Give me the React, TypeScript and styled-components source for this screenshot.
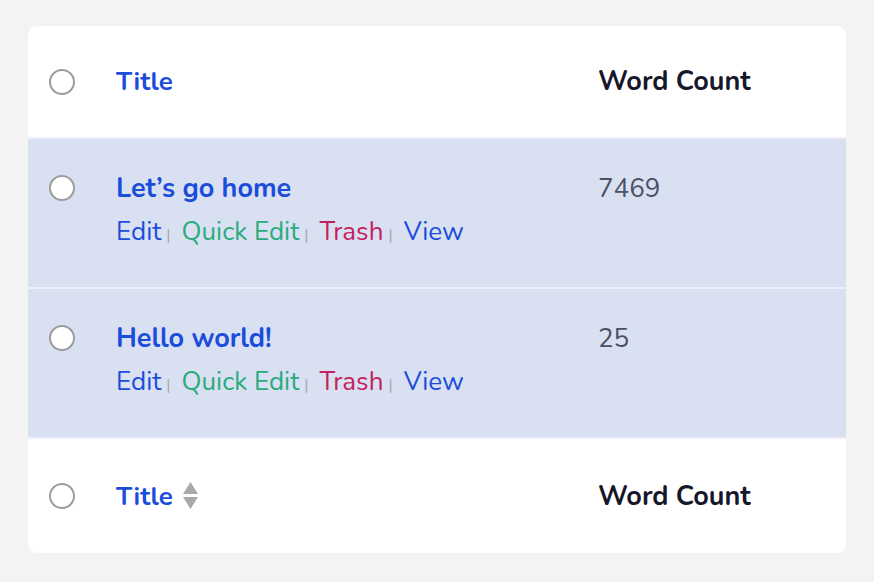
import React from 'react';
import styled, { createGlobalStyle } from 'styled-components';

const GlobalStyle = createGlobalStyle`
  html, body {
    margin: 0;
    padding: 0;
    background: #f3f3f3;
    font-family: 'Nunito', 'Lato', 'Noto Sans', sans-serif;
  }
`;

const posts = [
  { id: 1, title: 'Let’s go home', count: 7469 },
  { id: 2, title: 'Hello world!', count: 25 },
];

const Page = styled.div`
  padding: 26px 28px 28px 28px;
`;

const Card = styled.div`
  background: #ffffff;
  border-radius: 9px;
  overflow: hidden;
`;

const Row = styled.div<{ $kind: 'head' | 'body' }>`
  display: grid;
  grid-template-columns: 88px 1fr 248px;
  align-items: ${(p) => (p.$kind === 'body' ? 'start' : 'center')};
  height: ${(p) => (p.$kind === 'body' ? '150px' : '113px')};
  padding-top: ${(p) => (p.$kind === 'body' ? '33px' : '0')};
  box-sizing: border-box;
  background: ${(p) => (p.$kind === 'body' ? '#d9e0f2' : '#ffffff')};
  border-bottom: 2px solid #edf0f8;
  &:last-child {
    border-bottom: none;
    height: 114px;
  }
`;

const CheckCell = styled.div<{ $offset?: number }>`
  padding-left: 21px;
  padding-top: ${(p) => p.$offset ?? 0}px;
  display: flex;
  align-items: center;
`;

const Circle = styled.span`
  display: block;
  width: 26px;
  height: 26px;
  box-sizing: border-box;
  border-radius: 50%;
  border: 2px solid #9c9c9c;
  background: #ffffff;
`;

const HeadTitle = styled.div`
  display: flex;
  align-items: center;
  gap: 9px;
  color: #1b4ddb;
  font-size: 26px;
  font-weight: 700;
`;

const HeadCount = styled.div`
  color: #16172a;
  font-size: 27px;
  font-weight: 700;
`;

const PostTitle = styled.div`
  color: #1b4ddb;
  font-size: 27px;
  font-weight: 700;
  line-height: 34px;
`;

const Actions = styled.div`
  margin-top: 11px;
  display: flex;
  align-items: baseline;
  font-size: 26px;
  line-height: 30px;
`;

const Action = styled.span<{ $tone: 'blue' | 'green' | 'red' }>`
  color: ${(p) => (p.$tone === 'green' ? '#2aab7c' : p.$tone === 'red' ? '#c51f5d' : '#1b4ddb')};
`;

const Sep = styled.span`
  color: #a8a8b0;
  font-size: 16px;
  margin: 0 11px 0 5px;
`;

const Count = styled.div`
  color: #4b5064;
  font-size: 26px;
  line-height: 34px;
`;

const SortIcon = () => (
  <svg width="17" height="30" viewBox="0 0 17 30">
    <path d="M8.5 1 L16 13 L1 13 Z" fill="#a9a9a9" />
    <path d="M1 16 L16 16 L8.5 28 Z" fill="#a9a9a9" />
  </svg>
);

const Header = ({ sortable }: { sortable?: boolean }) => (
  <Row $kind="head">
    <CheckCell>
      <Circle />
    </CheckCell>
    <HeadTitle>
      Title
      {sortable && <SortIcon />}
    </HeadTitle>
    <HeadCount>Word Count</HeadCount>
  </Row>
);

export default function App() {
  return (
    <Page>
      <GlobalStyle />
      <Card>
        <Header />
        {posts.map((post) => (
          <Row $kind="body" key={post.id}>
            <CheckCell $offset={3}>
              <Circle />
            </CheckCell>
            <div>
              <PostTitle>{post.title}</PostTitle>
              <Actions>
                <Action $tone="blue">Edit</Action>
                <Sep>|</Sep>
                <Action $tone="green">Quick Edit</Action>
                <Sep>|</Sep>
                <Action $tone="red">Trash</Action>
                <Sep>|</Sep>
                <Action $tone="blue">View</Action>
              </Actions>
            </div>
            <Count>{post.count}</Count>
          </Row>
        ))}
        <Header sortable />
      </Card>
    </Page>
  );
}
